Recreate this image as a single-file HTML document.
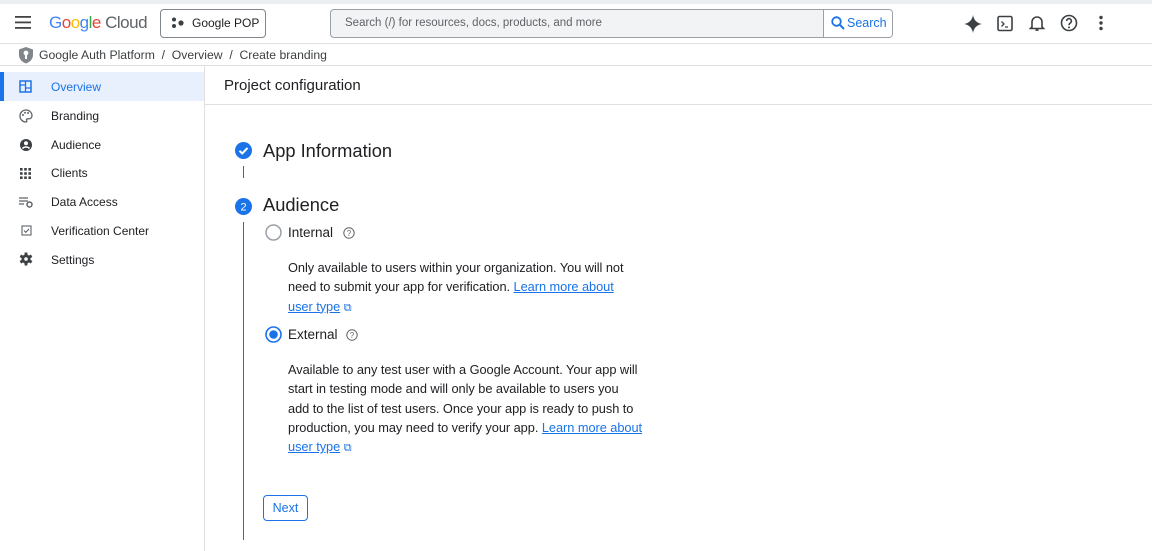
<!DOCTYPE html>
<html><head><style>
*{margin:0;padding:0;box-sizing:border-box}
body{width:1152px;height:551px;overflow:hidden;background:#fff;font-family:"Liberation Sans",Arial,sans-serif;color:#202124;position:relative}
.a{position:absolute}
.t{font-size:13px;white-space:nowrap}
.nav{position:absolute;left:51px;font-size:12px;color:#202124}
.ic{position:absolute;left:19px}
.p{position:absolute;left:288px;font-size:12.8px;line-height:19.3px;color:#202124;white-space:nowrap;letter-spacing:-0.05px}
a{color:#1a73e8;text-decoration:underline}
</style></head><body>
<div class="a" style="left:0;top:0;width:1152px;height:4px;background:#eceff1"></div>
<div class="a" style="left:0;top:43px;width:1152px;height:1px;background:#e0e0e0"></div>
<svg class="a" style="left:15px;top:16px" width="16" height="13"><rect y="0" width="16" height="1.8" fill="#444"/><rect y="5.5" width="16" height="1.8" fill="#444"/><rect y="11" width="16" height="1.8" fill="#444"/></svg>
<div class="a" style="left:49px;top:13px;font-size:17px;letter-spacing:-0.5px"><span style="color:#4285f4">G</span><span style="color:#ea4335">o</span><span style="color:#fbbc05">o</span><span style="color:#4285f4">g</span><span style="color:#34a853">l</span><span style="color:#ea4335">e</span> <span style="color:#5f6368">Cloud</span></div>
<div class="a" style="left:160px;top:9px;width:106px;height:29px;border:1px solid #80868b;border-radius:4px"></div>
<svg class="a" style="left:171px;top:17px" width="14" height="12"><circle cx="3" cy="2.5" r="2" fill="#3c4043"/><circle cx="3" cy="9" r="2" fill="#3c4043"/><circle cx="10" cy="6" r="2.6" fill="#3c4043"/></svg>
<div class="a" style="left:192px;top:16px;font-size:12px;color:#202124;white-space:nowrap">Google POP</div>
<div class="a" style="left:330px;top:9px;width:563px;height:29px;border:1px solid #9aa0a6;border-radius:4px;background:#f1f3f4;overflow:hidden"><div style="position:absolute;left:492px;top:0;width:72px;height:29px;background:#fff;border-left:1px solid #9aa0a6"></div></div>
<div class="a" style="left:345px;top:17px;font-size:11.5px;color:#5f6368">Search (/) for resources, docs, products, and more</div>
<svg class="a" style="left:831px;top:16px" width="14" height="14"><circle cx="5.5" cy="5.5" r="4.3" fill="none" stroke="#1a73e8" stroke-width="1.8"/><path d="M8.7 8.7L13 13" stroke="#1a73e8" stroke-width="2"/></svg>
<div class="a" style="left:847px;top:16px;font-size:12.5px;color:#1a73e8">Search</div>
<svg class="a" style="left:963px;top:14px" width="20" height="20"><path d="M10 1C10.8 6 14 9.2 19 10C14 10.8 10.8 14 10 19C9.2 14 6 10.8 1 10C6 9.2 9.2 6 10 1Z" fill="#3c4043"/></svg>
<svg class="a" style="left:997px;top:15px" width="17" height="17"><rect x="1" y="1.5" width="14" height="14" rx="1.5" fill="none" stroke="#3c4043" stroke-width="1.6"/><path d="M4.5 6.5L7 9L4.5 11.5M8 12H11" stroke="#3c4043" stroke-width="1.3" fill="none"/></svg>
<svg class="a" style="left:1029px;top:14px" width="16" height="18"><path d="M3 13V8a5 5 0 0110 0v5l1.5 1.5h-13z" fill="none" stroke="#3c4043" stroke-width="1.6"/><path d="M6.5 16h3" stroke="#3c4043" stroke-width="1.8"/></svg>
<svg class="a" style="left:1060px;top:14px" width="18" height="18"><circle cx="9" cy="9" r="7.5" fill="none" stroke="#3c4043" stroke-width="1.6"/><path d="M6.6 7a2.4 2.4 0 114 1.8c-.9.6-1.6 1-1.6 2.3" fill="none" stroke="#3c4043" stroke-width="1.6"/><circle cx="9" cy="13.4" r="1" fill="#3c4043"/></svg>
<svg class="a" style="left:1098px;top:15px" width="6" height="16"><circle cx="3" cy="2.5" r="1.7" fill="#3c4043"/><circle cx="3" cy="8" r="1.7" fill="#3c4043"/><circle cx="3" cy="13.5" r="1.7" fill="#3c4043"/></svg>
<svg class="a" style="left:18px;top:46px" width="16" height="18"><path d="M8 1L15 3.5V9c0 4-3 7-7 8.5C4 16 1 13 1 9V3.5z" fill="#80868b"/><circle cx="8" cy="7" r="2.4" fill="#fff"/><rect x="7" y="8" width="2" height="5" fill="#fff"/></svg>
<div class="a" style="left:39px;top:48px;font-size:12.2px;color:#3c4043;white-space:nowrap">Google Auth Platform&nbsp; / &nbsp;Overview&nbsp; / &nbsp;Create branding</div>
<div class="a" style="left:0;top:65px;width:1152px;height:1px;background:#e0e0e0"></div>
<div class="a" style="left:204px;top:66px;width:1px;height:485px;background:#e0e0e0"></div>
<div class="a" style="left:0;top:72px;width:204px;height:29px;background:#e8f0fe"></div>
<div class="a" style="left:0;top:72px;width:4px;height:29px;background:#1a73e8"></div>
<svg class="ic a" style="top:80px" width="13" height="13"><rect x="1" y="1" width="11" height="11" fill="none" stroke="#1a73e8" stroke-width="1.5"/><path d="M6.5 1v11M1 5h5.5M6.5 8h5.5" stroke="#1a73e8" stroke-width="1.3"/></svg>
<div class="nav" style="top:80px;color:#1a73e8">Overview</div>
<svg class="ic a" style="top:109px" width="14" height="14"><path d="M7 1a6 6 0 000 12c1 0 1-1 .6-1.6-.5-.8 0-1.6 1-1.6H10a3 3 0 003-3C13 3.5 10.3 1 7 1z" fill="none" stroke="#5f6368" stroke-width="1.3"/><circle cx="4" cy="6" r="1" fill="#5f6368"/><circle cx="6" cy="3.8" r="1" fill="#5f6368"/><circle cx="9" cy="4" r="1" fill="#5f6368"/></svg>
<div class="nav" style="top:109px">Branding</div>
<svg class="ic a" style="top:138px" width="14" height="14"><circle cx="7" cy="7" r="6" fill="#3c4043"/><circle cx="7" cy="5.3" r="2" fill="#fff"/><path d="M3.5 10.5c1.5-2 5.5-2 7 0" stroke="#fff" stroke-width="1.6" fill="none"/></svg>
<div class="nav" style="top:138px">Audience</div>
<svg class="ic a" style="top:167px" width="13" height="13" fill="#3c4043"><rect x="1" y="1" width="2.6" height="2.6"/><rect x="5.2" y="1" width="2.6" height="2.6"/><rect x="9.4" y="1" width="2.6" height="2.6"/><rect x="1" y="5.2" width="2.6" height="2.6"/><rect x="5.2" y="5.2" width="2.6" height="2.6"/><rect x="9.4" y="5.2" width="2.6" height="2.6"/><rect x="1" y="9.4" width="2.6" height="2.6"/><rect x="5.2" y="9.4" width="2.6" height="2.6"/><rect x="9.4" y="9.4" width="2.6" height="2.6"/></svg>
<div class="nav" style="top:166px">Clients</div>
<svg class="ic a" style="top:196px" width="15" height="13"><path d="M0 2h9M0 5h9M0 8h5" stroke="#5f6368" stroke-width="1.2"/><circle cx="10.5" cy="8.5" r="2.5" fill="none" stroke="#5f6368" stroke-width="1.5"/></svg>
<div class="nav" style="top:195px">Data Access</div>
<svg class="ic a" style="top:225px;left:21px" width="11" height="11"><rect x="1" y="1" width="9" height="9" fill="none" stroke="#5f6368" stroke-width="1.1"/><path d="M3 5.5l1.8 1.8L8 4" stroke="#5f6368" stroke-width="1.1" fill="none"/></svg>
<div class="nav" style="top:224px">Verification Center</div>
<svg class="ic a" style="top:252px" width="14" height="14"><g fill="#3c4043"><circle cx="7" cy="7" r="4.6"/><rect x="5.6" y="0.5" width="2.8" height="13"/><rect x="5.6" y="0.5" width="2.8" height="13" transform="rotate(60 7 7)"/><rect x="5.6" y="0.5" width="2.8" height="13" transform="rotate(120 7 7)"/></g><circle cx="7" cy="7" r="1.8" fill="#fff"/></svg>
<div class="nav" style="top:253px">Settings</div>
<div class="a" style="left:224px;top:77px;font-size:15px;color:#202124">Project configuration</div>
<div class="a" style="left:205px;top:104px;width:947px;height:1px;background:#e0e0e0"></div>
<svg class="a" style="left:235px;top:142px" width="17" height="17"><circle cx="8.5" cy="8.5" r="8.5" fill="#1a73e8"/><path d="M4.5 8.8l2.7 2.7L12.5 6" stroke="#fff" stroke-width="2" fill="none"/></svg>
<div class="a" style="left:263px;top:140px;font-size:18.3px;color:#202124">App Information</div>
<div class="a" style="left:243px;top:166px;width:1px;height:12px;background:#5f6368"></div>
<svg class="a" style="left:235px;top:198px" width="17" height="17"><circle cx="8.5" cy="8.5" r="8.5" fill="#1a73e8"/><text x="8.5" y="12.5" font-size="11" fill="#fff" text-anchor="middle" font-family="Liberation Sans">2</text></svg>
<div class="a" style="left:263px;top:194px;font-size:18.3px;color:#202124">Audience</div>
<div class="a" style="left:243px;top:222px;width:1px;height:318px;background:#5f6368"></div>
<svg class="a" style="left:265px;top:224px" width="17" height="17"><circle cx="8.5" cy="8.5" r="7.5" fill="none" stroke="#9aa0a6" stroke-width="1.5"/></svg>
<div class="a" style="left:288px;top:225px;font-size:13.5px">Internal</div>
<svg class="a" style="left:343px;top:227px" width="12" height="12"><circle cx="6" cy="6" r="5.2" fill="none" stroke="#5f6368" stroke-width="1"/><text x="6" y="9" font-size="8" text-anchor="middle" fill="#5f6368" font-family="Liberation Sans">?</text></svg>
<div class="p" style="top:258px">Only available to users within your organization. You will not<br>need to submit your app for verification. <a>Learn more about</a><br><a>user type</a> <span style="color:#1a73e8;font-size:11px">&#x29C9;</span></div>
<svg class="a" style="left:265px;top:326px" width="17" height="17"><circle cx="8.5" cy="8.5" r="7.5" fill="none" stroke="#1a73e8" stroke-width="1.6"/><circle cx="8.5" cy="8.5" r="4.3" fill="#1a73e8"/></svg>
<div class="a" style="left:288px;top:327px;font-size:13.5px">External</div>
<svg class="a" style="left:346px;top:329px" width="12" height="12"><circle cx="6" cy="6" r="5.2" fill="none" stroke="#5f6368" stroke-width="1"/><text x="6" y="9" font-size="8" text-anchor="middle" fill="#5f6368" font-family="Liberation Sans">?</text></svg>
<div class="p" style="top:360px">Available to any test user with a Google Account. Your app will<br>start in testing mode and will only be available to users you<br>add to the list of test users. Once your app is ready to push to<br>production, you may need to verify your app. <a>Learn more about</a><br><a>user type</a> <span style="color:#1a73e8;font-size:11px">&#x29C9;</span></div>
<div class="a" style="left:263px;top:495px;width:45px;height:26px;border:1px solid #1a73e8;border-radius:4px;color:#1a73e8;font-size:12.5px;text-align:center;line-height:24px">Next</div>
</body></html>
